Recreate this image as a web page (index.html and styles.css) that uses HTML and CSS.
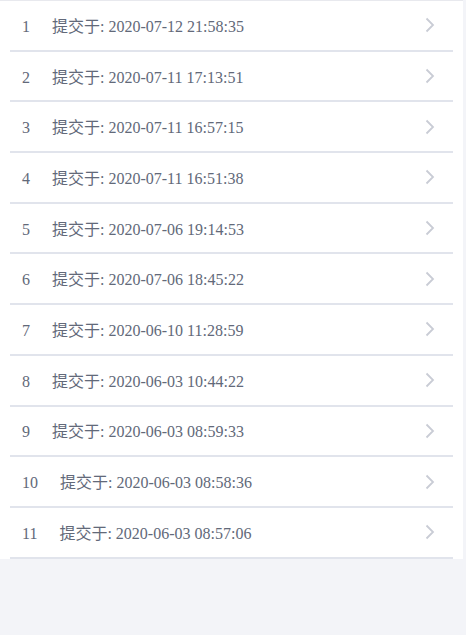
FILE: index.html
```html
<!DOCTYPE html>
<html lang="zh-CN">
<head>
  <meta charset="UTF-8" />
  <meta name="viewport" content="width=device-width, initial-scale=1.0" />
  <title>提交记录</title>
  <link rel="stylesheet" href="styles.css">
</head>
<body>
  <div class="list">
    <div class="item"><p class="text"><span class="num">1</span>提交于: 2020-07-12 21:58:35</p><svg class="arrow" viewBox="0 0 10 16"><path d="M1.5 1.5 L8 8 L1.5 14.5" /></svg></div>
    <div class="item"><p class="text"><span class="num">2</span>提交于: 2020-07-11 17:13:51</p><svg class="arrow" viewBox="0 0 10 16"><path d="M1.5 1.5 L8 8 L1.5 14.5" /></svg></div>
    <div class="item"><p class="text"><span class="num">3</span>提交于: 2020-07-11 16:57:15</p><svg class="arrow" viewBox="0 0 10 16"><path d="M1.5 1.5 L8 8 L1.5 14.5" /></svg></div>
    <div class="item"><p class="text"><span class="num">4</span>提交于: 2020-07-11 16:51:38</p><svg class="arrow" viewBox="0 0 10 16"><path d="M1.5 1.5 L8 8 L1.5 14.5" /></svg></div>
    <div class="item"><p class="text"><span class="num">5</span>提交于: 2020-07-06 19:14:53</p><svg class="arrow" viewBox="0 0 10 16"><path d="M1.5 1.5 L8 8 L1.5 14.5" /></svg></div>
    <div class="item"><p class="text"><span class="num">6</span>提交于: 2020-07-06 18:45:22</p><svg class="arrow" viewBox="0 0 10 16"><path d="M1.5 1.5 L8 8 L1.5 14.5" /></svg></div>
    <div class="item"><p class="text"><span class="num">7</span>提交于: 2020-06-10 11:28:59</p><svg class="arrow" viewBox="0 0 10 16"><path d="M1.5 1.5 L8 8 L1.5 14.5" /></svg></div>
    <div class="item"><p class="text"><span class="num">8</span>提交于: 2020-06-03 10:44:22</p><svg class="arrow" viewBox="0 0 10 16"><path d="M1.5 1.5 L8 8 L1.5 14.5" /></svg></div>
    <div class="item"><p class="text"><span class="num">9</span>提交于: 2020-06-03 08:59:33</p><svg class="arrow" viewBox="0 0 10 16"><path d="M1.5 1.5 L8 8 L1.5 14.5" /></svg></div>
    <div class="item"><p class="text"><span class="num">10</span>提交于: 2020-06-03 08:58:36</p><svg class="arrow" viewBox="0 0 10 16"><path d="M1.5 1.5 L8 8 L1.5 14.5" /></svg></div>
    <div class="item"><p class="text"><span class="num">11</span>提交于: 2020-06-03 08:57:06</p><svg class="arrow" viewBox="0 0 10 16"><path d="M1.5 1.5 L8 8 L1.5 14.5" /></svg></div>
  </div>
</body>
</html>
```

FILE: styles.css
```css
html, body {
  height: 100%;
}
body {
  margin: 0;
  background: #f3f4f8;
  font-family: "Liberation Serif", "Noto Sans CJK SC", serif;
  font-size: 16px;
  color: #626979;
}
.list {
  width: 463px;
  background: #fff;
  border-top: 1px solid #e8e9ee;
}
.item {
  display: flex;
  align-items: center;
  height: 48.7px;
  margin: 0 10px;
  padding-left: 12px;
  border-bottom: 2px solid #e1e4ec;
}
.text {
  flex: 1;
  margin: 0;
  padding-top: 3px;
  line-height: 20px;
}
.num {
  margin-right: 22px;
}
.arrow {
  width: 10px;
  height: 16px;
  margin-right: 18px;
  fill: none;
  stroke: #c9ccd5;
  stroke-width: 1.8;
}
```
